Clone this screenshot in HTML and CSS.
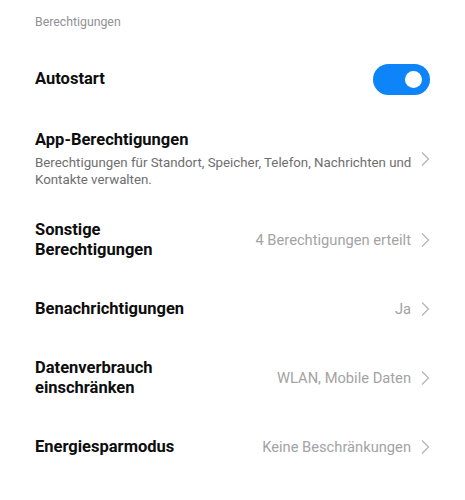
FILE: index.html
```html
<!DOCTYPE html>
<html lang="de">
<head>
<meta charset="utf-8">
<link rel="stylesheet" href="styles.css">
</head>
<body>
<div class="page">
  <div class="section-title">Berechtigungen</div>
  <div class="row row-first">
    <div class="text"><div class="title">Autostart</div></div>
    <div class="toggle on"><span class="knob"></span></div>
  </div>
  <div class="row row-tall">
    <div class="text">
      <div class="title">App-Berechtigungen</div>
      <div class="sub">Berechtigungen für Standort, Speicher, Telefon, Nachrichten und Kontakte verwalten.</div>
    </div>
    <svg class="chev" viewBox="0 0 10 16" width="10" height="16"><path d="M2 1.5 L8.5 8 L2 14.5" fill="none" stroke="#b5b5b5" stroke-width="1.3"/></svg>
  </div>
  <div class="row">
    <div class="text"><div class="title">Sonstige<br>Berechtigungen</div></div>
    <div class="value">4 Berechtigungen erteilt</div>
    <svg class="chev" viewBox="0 0 10 16" width="10" height="16"><path d="M2 1.5 L8.5 8 L2 14.5" fill="none" stroke="#b5b5b5" stroke-width="1.3"/></svg>
  </div>
  <div class="row">
    <div class="text"><div class="title">Benachrichtigungen</div></div>
    <div class="value">Ja</div>
    <svg class="chev" viewBox="0 0 10 16" width="10" height="16"><path d="M2 1.5 L8.5 8 L2 14.5" fill="none" stroke="#b5b5b5" stroke-width="1.3"/></svg>
  </div>
  <div class="row">
    <div class="text"><div class="title">Datenverbrauch<br>einschränken</div></div>
    <div class="value">WLAN, Mobile Daten</div>
    <svg class="chev" viewBox="0 0 10 16" width="10" height="16"><path d="M2 1.5 L8.5 8 L2 14.5" fill="none" stroke="#b5b5b5" stroke-width="1.3"/></svg>
  </div>
  <div class="row">
    <div class="text"><div class="title">Energiesparmodus</div></div>
    <div class="value">Keine Beschränkungen</div>
    <svg class="chev" viewBox="0 0 10 16" width="10" height="16"><path d="M2 1.5 L8.5 8 L2 14.5" fill="none" stroke="#b5b5b5" stroke-width="1.3"/></svg>
  </div>
</div>
</body>
</html>
```
FILE: styles.css
```css
html, body {
  margin: 0;
  padding: 0;
  background: #ffffff;
}
body {
  font-family: Roboto, "Noto Sans", "Liberation Sans", sans-serif;
  width: 465px;
  height: 500px;
  overflow: hidden;
}
.page {
  padding: 0 35px;
}
.section-title {
  height: 45px;
  display: flex;
  align-items: center;
  font-size: 12.3px;
  color: #8f9096;
  padding-bottom: 2px;
  box-sizing: border-box;
}
.row {
  display: flex;
  align-items: center;
  min-height: 69px;
}
.row-first {
  min-height: 68px;
}
.row-tall {
  min-height: 92px;
}
.text {
  flex: 1;
  min-width: 0;
}
.title {
  font-size: 16.5px;
  font-weight: 700;
  color: #0d0d0d;
  line-height: 19.5px;
}
.sub {
  font-size: 13.3px;
  color: #6e6e6e;
  line-height: 17px;
  margin-top: 4px;
  padding-right: 4px;
}
.value {
  font-size: 14.7px;
  color: #a3a3a3;
  margin-right: 9px;
  white-space: nowrap;
}
.chev {
  flex: none;
  display: block;
}
.toggle {
  width: 57px;
  height: 31px;
  border-radius: 16px;
  background: #0d84f7;
  position: relative;
  flex: none;
}
.knob {
  position: absolute;
  width: 17px;
  height: 17px;
  border-radius: 50%;
  background: #ffffff;
  right: 8px;
  top: 7px;
}
```
